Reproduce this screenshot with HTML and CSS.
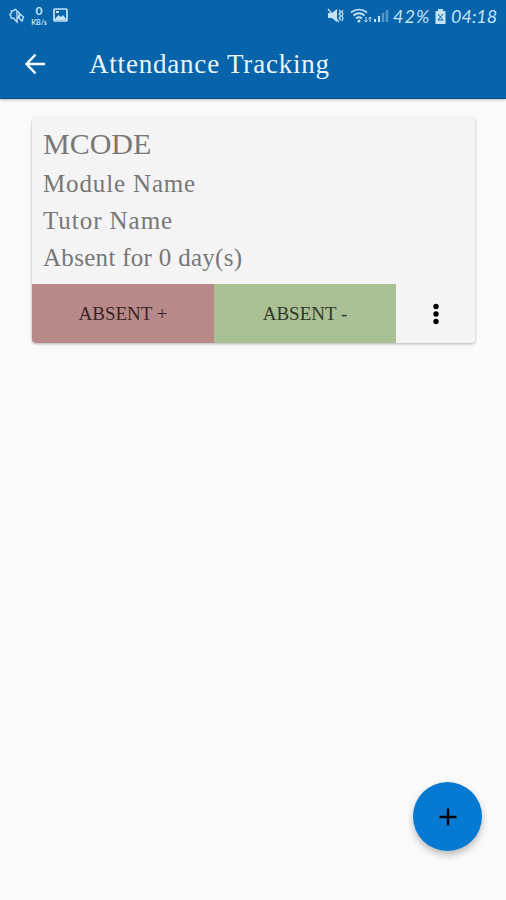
FILE: index.html
```html
<!DOCTYPE html>
<html lang="en">
<head>
<meta charset="utf-8">
<title>Attendance Tracking</title>
<link rel="stylesheet" href="styles.css">
</head>
<body>
<header class="top">
  <div class="status">
    <svg class="hand" width="16" height="16" viewBox="0 0 16 16" fill="none" stroke="currentColor" stroke-width="1.300">
      <path d="M4.500 3Q1 2 2.500 5Q-.5 6 2 8Q1 11 4.500 10L8 14V3Q6 0 4.500 3M8 3q3 1 2 5l-2 3M11 6l3.500 3-1.500 4-3-3z"/>
    </svg>
    <div class="speed"><b>0</b><small>KB/s</small></div>
    <svg class="picture" width="15" height="14" viewBox="0 0 15 14">
      <rect x="1" y="1" width="13" height="12" rx="1" fill="none" stroke="currentColor" stroke-width="1.700"/>
      <path d="M2 11l3.500-4L8 9l2-2 3 4v1H2zM3 3h3v2H3z" fill="currentColor"/>
    </svg>
    <svg class="right-icons" width="64" height="18" viewBox="0 0 64 18" fill="none" stroke="currentColor">
      <path d="M1 6h4l5-4v13l-5-4H1z" fill="currentColor" stroke="none"/>
      <path d="M1 2l11 13" stroke-width="1.200"/>
      <path d="M12 3l2 2-2 2 2 2-2 2 2 2M16 3l-1 2 1 2-1 2 1 2-1 3" stroke-width="1.200"/>
      <path d="M24 5.500Q32-.5 40 5.500M26.500 8.500Q32 4 37.500 8.500M29 11.500Q32 9 35 11.500" stroke-width="1.700"/>
      <circle cx="32" cy="14" r="1.500" fill="currentColor" stroke="none"/>
      <path d="M39 10v5m-1.500-1.500L39 15l1.500-1.500M43 15v-5m-1.500 1.500L43 10l1.500 1.500"/>
      <path d="M48 12v3M52 9v6" stroke-width="2"/>
      <path d="M56 6v9M60 3v12" stroke-width="2.500" opacity=".4"/>
    </svg>
    <span class="battery-text">42%</span>
    <svg class="battery" width="11" height="15" viewBox="0 0 11 15">
      <path d="M3 0h5v2h2.500v13H.5V2H3z" fill="currentColor"/>
      <path d="M3 5l5 6M8 5l-5 6M3 11h5" stroke="#0764ab" fill="none"/>
    </svg>
    <span class="clock">04:18</span>
  </div>
  <div class="bar">
    <svg class="back" width="22" height="22" viewBox="0 0 22 22" fill="none" stroke="currentColor" stroke-width="2.400"><path d="M11.500 1.700L2.500 11l9 9.300M2.500 11H21"/></svg>
    <h1>Attendance Tracking</h1>
  </div>
</header>
<main>
  <section class="card">
    <div class="info">
      <h2>MCODE</h2>
      <p class="module">Module Name</p>
      <p class="tutor">Tutor Name</p>
      <p class="days">Absent for 0 day(s)</p>
    </div>
    <div class="actions">
      <button class="plus">ABSENT +</button>
      <button class="minus">ABSENT -</button>
      <button class="more" aria-label="More"><svg width="6" height="22" viewBox="0 0 6 22"><circle cx="3" cy="3.500" r="2.700"/><circle cx="3" cy="11" r="2.700"/><circle cx="3" cy="18.500" r="2.700"/></svg></button>
    </div>
  </section>
</main>
<button class="fab" aria-label="Add"><svg width="18" height="18" viewBox="0 0 18 18" stroke="#000" stroke-width="2.300"><path d="M9 .5v17M.5 9h17"/></svg></button>
</body>
</html>
```
FILE: styles.css
```css
* { box-sizing: border-box; }
body { margin: 0; height: 900px; background: #fafafa; font-family: "Liberation Serif", serif; overflow: hidden; }
h1, h2, p { margin: 0; font-weight: 400; white-space: nowrap; }
button { border: 0; padding: 0; font: inherit; }
svg { display: block; flex: none; }
.top { height: 99px; background: #0764ab; border-bottom: 1px solid #07508a; color: #e9f4fb; box-shadow: 0 1px 3px rgba(0,0,0,.25); }
.status { height: 32px; display: flex; align-items: center; padding-left: 9px; color: #c5e3f5; }
.speed { width: 20px; margin: 0 4px; text-align: center; font-family: Lato, sans-serif; }
.speed b { display: block; font-size: 12px; line-height: 14px; margin-top: -3px; }
.speed small { display: block; font-size: 7px; line-height: 8px; font-weight: 700; }
.picture { margin-top: -2px; }
.right-icons { margin-left: 259px; }
.battery-text, .clock { font: italic 18px/32px Lato, sans-serif; white-space: nowrap; }
.battery-text { width: 44px; padding-left: 2px; letter-spacing: 1px; }
.clock { padding-left: 5px; letter-spacing: 0; }
.bar { height: 64px; display: flex; align-items: center; padding-left: 24px; }
.back { color: #fff; }
h1 { font-size: 27px; line-height: 34px; margin-left: 43px; letter-spacing: .8px; }
main { padding: 19px 30px 0 32px; }
.card { height: 225px; width: 443px; border-radius: 4px; background: #f4f4f4; box-shadow: 0 1px 3px rgba(0,0,0,.3); overflow: hidden; }
.info { height: 166px; padding: 7px 11px 0; color: #777; }
h2 { font-size: 30px; line-height: 38px; margin-bottom: 2px; }
.info p { font-size: 25px; line-height: 37px; }
.module { letter-spacing: .85px; }
.tutor { letter-spacing: .95px; }
.days { letter-spacing: .3px; }
.actions { display: grid; grid-template-columns: 182px 182px 1fr; height: 59px; }
.actions button { display: flex; align-items: center; justify-content: center; font-size: 19px; letter-spacing: 0; white-space: nowrap; }
.plus { background: #b88989; color: #382527; }
.minus { background: #a9bf94; color: #303a2b; }
.actions .more { background: #f4f4f4; }
.fab { position: absolute; left: 413px; top: 782px; width: 69px; height: 69px; border-radius: 50%; background: #067ad3; display: flex; align-items: center; justify-content: center; box-shadow: 0 4px 7px rgba(0,0,0,.25); }
```
